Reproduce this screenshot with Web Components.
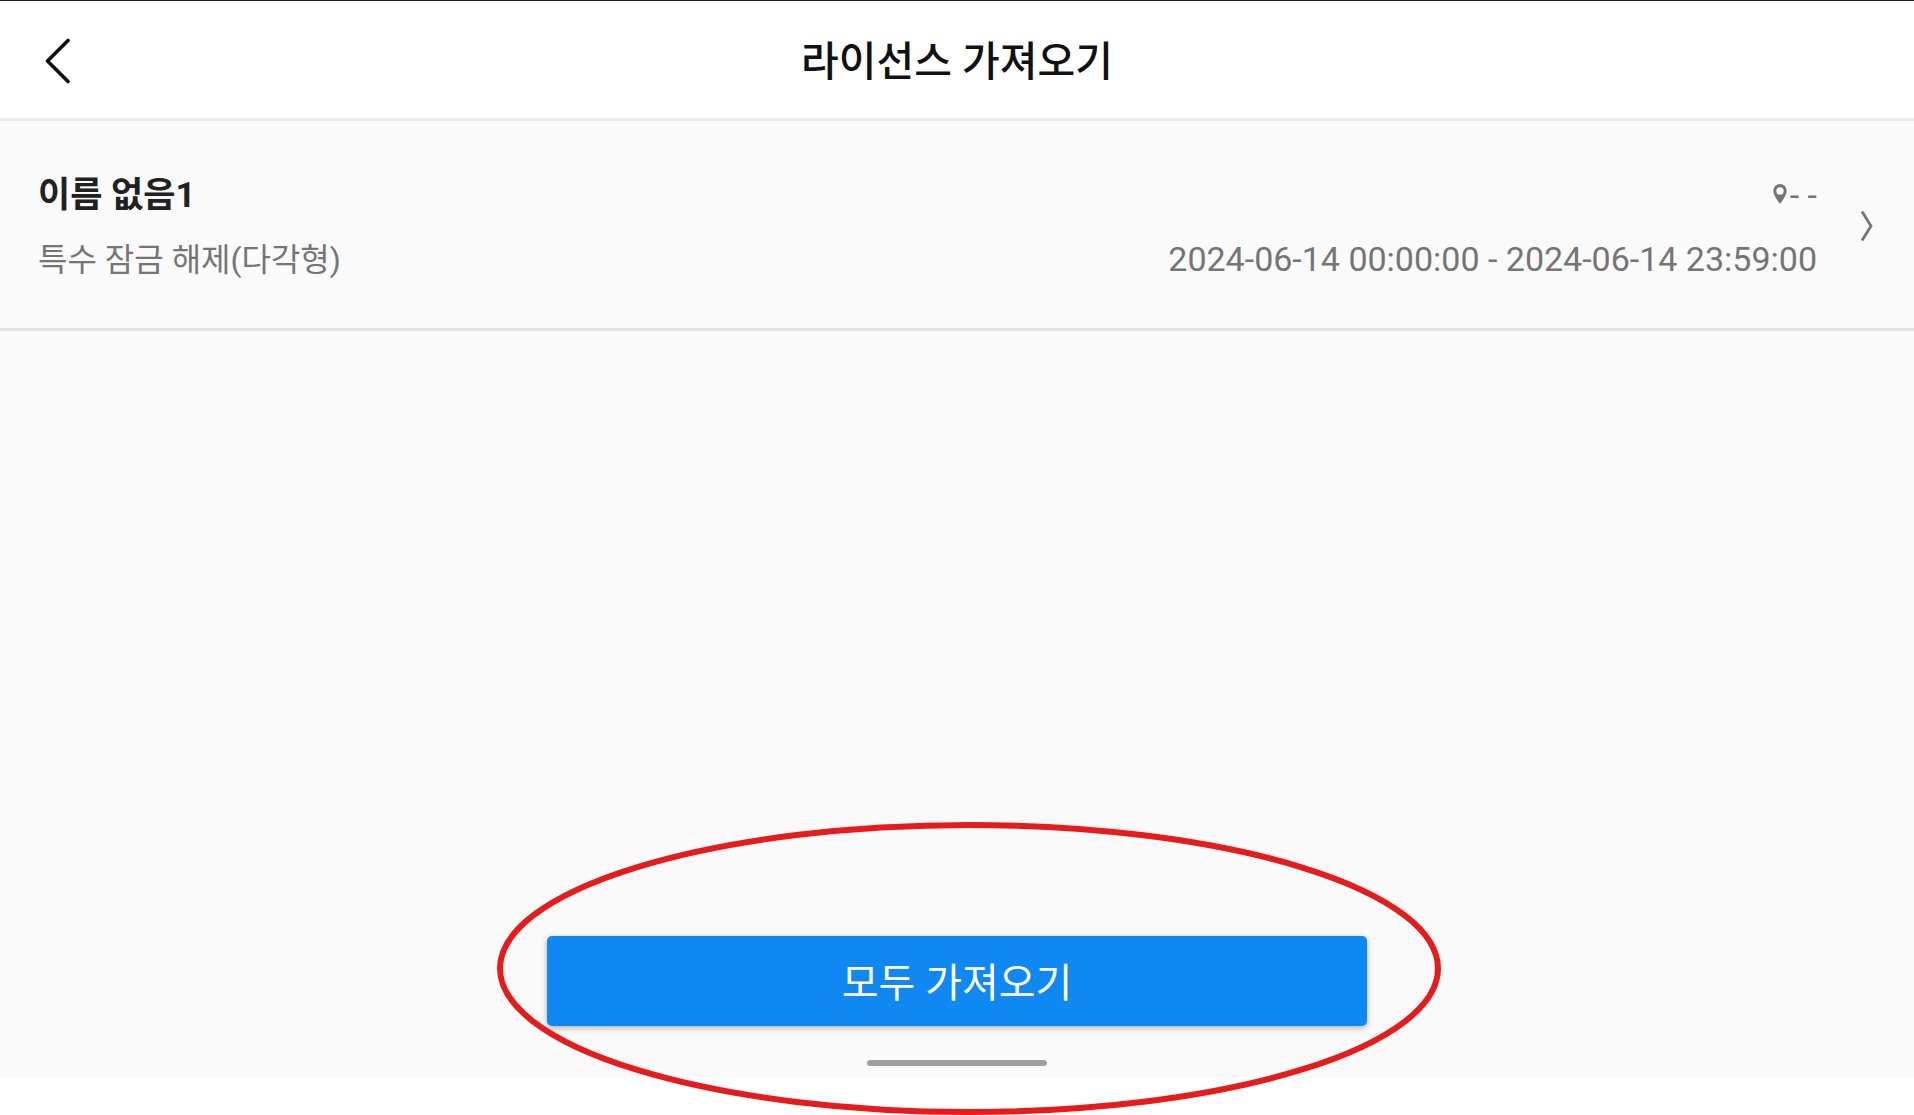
<!DOCTYPE html>
<html lang="ko">
<head>
<meta charset="utf-8">
<meta name="viewport" content="width=device-width, initial-scale=1">
<title>라이선스 가져오기</title>
<style>
  body{
    margin:0;
    background:#fff;
    font-family:Roboto, "Noto Sans CJK KR", sans-serif;
  }
</style>
</head>
<body>
<license-screen>
  <title-bar slot="header">라이선스 가져오기</title-bar>
  <license-item>
    <span slot="name">이름 없음1</span>
    <span slot="type">특수 잠금 해제(다각형)</span>
    <span slot="place">- -</span>
    <span slot="period">2024-06-14 00:00:00 - 2024-06-14 23:59:00</span>
  </license-item>
  <import-action slot="footer">모두 가져오기</import-action>
</license-screen>

<script>
class LicenseScreen extends HTMLElement{
    constructor(){
        super();
        this.attachShadow({mode: "open"})
    }
    connectedCallback(){
        this.shadowRoot.innerHTML = `
        <style>
          :host{
            display:flex;
            flex-direction:column;
            box-sizing:border-box;
            min-height:100vh;
            border-top:1px solid #1a1d29;
            padding-bottom:37px;
          }
          main{
            flex:1;
            background:#fafafa;
          }
        </style>
        <slot name="header"></slot>
        <main><slot></slot></main>
        <slot name="footer"></slot>
        `;
    }
}
customElements.define("license-screen", LicenseScreen)

class TitleBar extends HTMLElement{
    constructor(){
        super();
        this.attachShadow({mode: "open"})
    }
    connectedCallback(){
        this.shadowRoot.innerHTML = `
        <style>
          :host{
            display:block;
            border-bottom:3px solid #ebebeb;
            background:#fff;
          }
          header{
            display:grid;
            grid-template-columns:72px 1fr 72px;
            align-items:center;
            padding:0 20px;
            height:117px;
          }
          button{
            display:flex;
            align-items:center;
            justify-content:center;
            height:72px;
            padding:0;
            border:0;
            background:none;
            cursor:pointer;
          }
          h1{
            margin:0;
            padding-top:4px;
            font-size:41px;
            line-height:60px;
            font-weight:500;
            text-align:center;
            color:#111;
          }
        </style>
        <header>
          <button type="button" aria-label="뒤로">
            <svg width="28" height="48" viewBox="0 0 28 48" fill="none" stroke="#111" stroke-width="3.6" stroke-linecap="round" stroke-linejoin="round">
              <path d="M26 4.5 5.5 25 26 45.5"/>
            </svg>
          </button>
          <h1><slot></slot></h1>
        </header>
        `;
    }
}
customElements.define("title-bar", TitleBar)

class LicenseItem extends HTMLElement{
    constructor(){
        super();
        this.attachShadow({mode: "open"})
    }
    connectedCallback(){
        this.shadowRoot.innerHTML = `
        <style>
          :host{
            display:block;
            border-bottom:3px solid #e0e0e0;
          }
          a{
            display:flex;
            align-items:center;
            gap:43px;
            padding:42px 41px 37px 38px;
            color:#757575;
            text-decoration:none;
            font-size:34px;
            line-height:64px;
          }
          .lines{
            flex:1;
          }
          .line{
            display:flex;
            justify-content:space-between;
            align-items:baseline;
            height:64px;
          }
          .name{
            font-size:35px;
            font-weight:700;
            color:#212121;
          }
          .type{
            font-size:32px;
          }
          .pin{
            margin-right:3px;
          }
        </style>
        <a href="#">
          <div class="lines">
            <div class="line">
              <slot name="name" class="name"></slot>
              <div>
                <svg class="pin" width="14" height="23" viewBox="0 0 14 23" fill="#757575" fill-rule="evenodd">
                  <path d="M7 0a6.7 6.7 0 0 0-6.7 6.8C.3 11.7 7 20 7 20s6.7-8.3 6.7-13.2A6.7 6.7 0 0 0 7 0zm0 3.2a3.7 3.7 0 1 1 0 7.4 3.7 3.7 0 0 1 0-7.4z"/>
                </svg><slot name="place"></slot>
              </div>
            </div>
            <div class="line">
              <slot name="type" class="type"></slot>
              <slot name="period"></slot>
            </div>
          </div>
          <svg width="13" height="32" viewBox="0 0 13 32" fill="none" stroke="#757575" stroke-width="2.8">
            <path d="M2 .5 11 15 2 29.500"/>
          </svg>
        </a>
        `;
    }
}
customElements.define("license-item", LicenseItem)

class ImportAction extends HTMLElement{
    constructor(){
        super();
        this.attachShadow({mode: "open"})
    }
    connectedCallback(){
        this.shadowRoot.innerHTML = `
        <style>
          :host{
            display:flex;
            flex-direction:column;
            align-items:center;
            position:relative;
            padding:0 24px 12px;
            background:#fafafa;
          }
          button{
            width:100%;
            max-width:820px;
            height:90px;
            margin-bottom:34px;
            padding:5px 0 0;
            border:0;
            border-radius:5px;
            background:#1088f2;
            box-shadow:0 2px 6px rgba(0,0,0,.3);
            color:#fff;
            font-family:inherit;
            font-size:40px;
            line-height:60px;
            cursor:pointer;
          }
          .handle{
            width:180px;
            height:6px;
            border-radius:3px;
            background:#9e9e9e;
          }
          /* red ring round the button */
          .marker{
            position:absolute;
            left:calc(50% - 460px);
            bottom:-37px;
            pointer-events:none;
          }
        </style>
        <button type="button"><slot></slot></button>
        <div class="handle"></div>
        <svg class="marker" width="944" height="293" viewBox="0 0 944 293" fill="none" stroke="#e61b1b" stroke-width="6">
          <ellipse cx="472" cy="146.5" rx="469" ry="143.5"/>
        </svg>
        `;
    }
}
customElements.define("import-action", ImportAction)
</script>
</body>
</html>
